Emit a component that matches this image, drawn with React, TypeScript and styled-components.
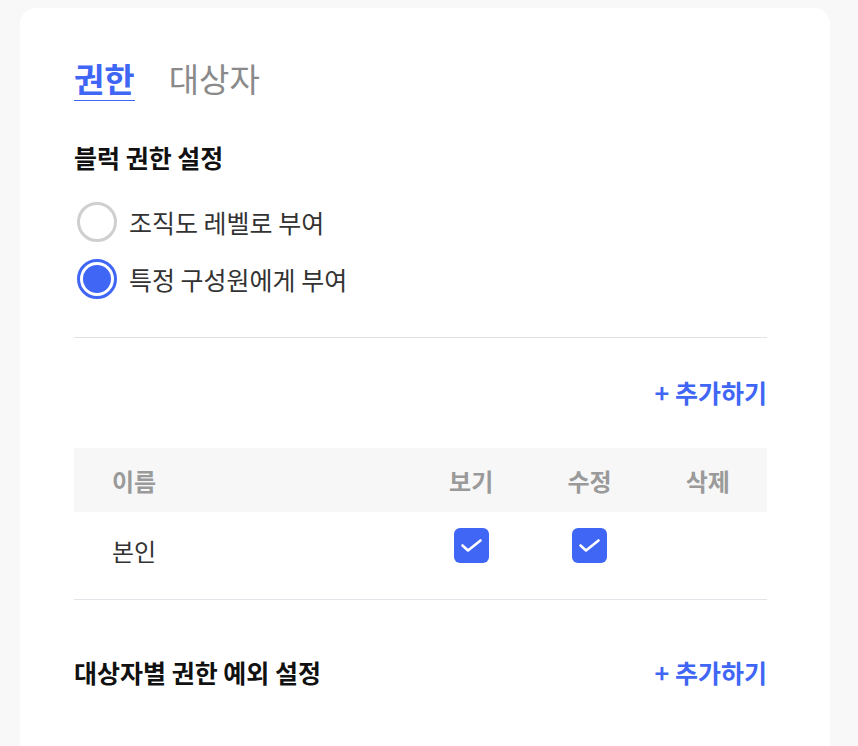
import { FC } from "react";
import styled, { createGlobalStyle } from "styled-components";

const GlobalStyle = createGlobalStyle`
  body {
    margin: 0;
    background: #f8f8f8;
    font-family: "Noto Sans CJK KR", "Noto Sans", sans-serif;
  }
`;

const BLUE = "#4066f5";

const Page = styled.div`
  padding: 8px 28px 0 20px;
  height: 746px;
  overflow: hidden;
  box-sizing: border-box;
`;

const Card = styled.div`
  background: #fff;
  border-radius: 16px;
  width: 810px;
  min-height: 800px;
  padding: 50px 63px 0 54px;
  box-sizing: border-box;
`;

const Tabs = styled.div`
  display: flex;
  gap: 34px;
`;

const Tab = styled.div<{ $active?: boolean }>`
  font-size: 33px;
  line-height: 40px;
  font-weight: ${(p) => (p.$active ? 700 : 400)};
  color: ${(p) => (p.$active ? BLUE : "#8a8a8a")};
  padding-bottom: 2px;
  border-bottom: 1.5px solid ${(p) => (p.$active ? BLUE : "transparent")};
`;

const SectionTitle = styled.h2<{ $top?: number }>`
  margin: ${(p) => p.$top ?? 0}px 0 0;
  font-size: 25px;
  line-height: 32px;
  font-weight: 700;
  color: #111;
`;

const RadioList = styled.div`
  display: flex;
  flex-direction: column;
  gap: 17px;
  margin-top: 29px;
`;

const RadioRow = styled.label`
  display: flex;
  align-items: center;
  gap: 12px;
  font-size: 25px;
  color: #333;
`;

const RadioCircle = styled.span<{ $checked?: boolean }>`
  width: 40px;
  height: 40px;
  margin-left: 3px;
  box-sizing: border-box;
  border-radius: 50%;
  border: 3px solid ${(p) => (p.$checked ? BLUE : "#cfcfcf")};
  padding: 3px;
  display: flex;
  &::after {
    content: "";
    flex: 1;
    border-radius: 50%;
    background: ${(p) => (p.$checked ? BLUE : "transparent")};
  }
`;

const Divider = styled.hr<{ $top: number }>`
  border: none;
  border-top: 1px solid #e3e3e3;
  margin: ${(p) => p.$top}px 0 0;
`;

const ActionRow = styled.div<{ $top: number }>`
  display: flex;
  justify-content: space-between;
  align-items: center;
  margin-top: ${(p) => p.$top}px;
`;

const AddButton = styled.button`
  margin-left: auto;
  border: none;
  background: none;
  padding: 0;
  font-family: inherit;
  font-size: 25px;
  line-height: 32px;
  font-weight: 700;
  color: ${BLUE};
  cursor: pointer;
`;

const Table = styled.div`
  margin-top: 40px;
`;

const Grid = styled.div<{ $head?: boolean }>`
  display: grid;
  grid-template-columns: 338px repeat(3, 1fr);
  align-items: ${(p) => (p.$head ? "center" : "start")};
  box-sizing: border-box;
  height: ${(p) => (p.$head ? 64 : 88)}px;
  padding-top: ${(p) => (p.$head ? 0 : 16)}px;
  background: ${(p) => (p.$head ? "#f7f7f7" : "#fff")};
  border-bottom: ${(p) => (p.$head ? "none" : "1px solid #e2e4e9")};
  font-size: 24px;
  font-weight: ${(p) => (p.$head ? 700 : 400)};
  color: ${(p) => (p.$head ? "#9a9a9a" : "#333")};
`;

const NameCell = styled.div<{ $body?: boolean }>`
  padding-left: 38px;
  line-height: ${(p) => (p.$body ? "45px" : "normal")};
`;

const Cell = styled.div`
  display: flex;
  justify-content: center;
`;

const CheckBox = styled.span`
  width: 35px;
  height: 35px;
  border-radius: 6px;
  background: ${BLUE};
  display: block;
`;

const Check: FC = () => (
  <CheckBox>
    <svg width="35" height="35" viewBox="0 0 35 35" fill="none">
      <path d="M8.5 17.5 L14 22.5 L26.5 12.5" stroke="#fff" strokeWidth="2.6" strokeLinecap="round" strokeLinejoin="round" />
    </svg>
  </CheckBox>
);

export default function App() {
  return (
    <>
      <GlobalStyle />
      <Page>
        <Card>
          <Tabs>
            <Tab $active>권한</Tab>
            <Tab>대상자</Tab>
          </Tabs>
          <SectionTitle $top={40}>블럭 권한 설정</SectionTitle>
          <RadioList>
            <RadioRow>
              <RadioCircle />
              조직도 레벨로 부여
            </RadioRow>
            <RadioRow>
              <RadioCircle $checked />
              특정 구성원에게 부여
            </RadioRow>
          </RadioList>
          <Divider $top={38} />
          <ActionRow $top={38}>
            <AddButton>+ 추가하기</AddButton>
          </ActionRow>
          <Table>
            <Grid $head>
              <NameCell>이름</NameCell>
              <Cell>보기</Cell>
              <Cell>수정</Cell>
              <Cell>삭제</Cell>
            </Grid>
            <Grid>
              <NameCell $body>본인</NameCell>
              <Cell><Check /></Cell>
              <Cell><Check /></Cell>
              <Cell />
            </Grid>
          </Table>
          <ActionRow $top={56}>
            <SectionTitle>대상자별 권한 예외 설정</SectionTitle>
            <AddButton>+ 추가하기</AddButton>
          </ActionRow>
        </Card>
      </Page>
    </>
  );
}
